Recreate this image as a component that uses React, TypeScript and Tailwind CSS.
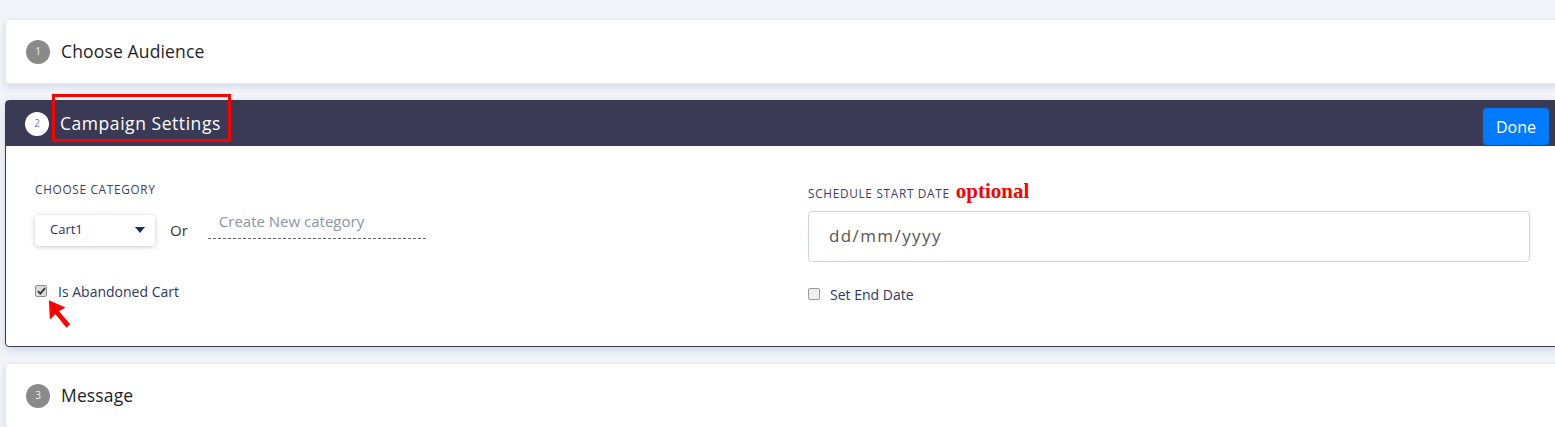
import React from "react";

const heading = { fontFamily: '"Open Sans", "Noto Sans", sans-serif' };
const body = { fontFamily: '"Open Sans", "Noto Sans", sans-serif' };

function Circle({ n, light }: { n: number; light?: boolean }) {
  return (
    <span
      className={
        "flex h-[24px] w-[24px] shrink-0 items-center justify-center rounded-full text-[10px] " +
        (light ? "bg-white text-[#6f74d6]" : "bg-[#8a8a8a] text-[#f3f3f3]")
      }
      style={body}
    >
      {n}
    </span>
  );
}

function CollapsedCard({ n, title }: { n: number; title: string }) {
  return (
    <div className="flex h-[65px] w-[1555px] items-center gap-[11px] rounded-[4px] border border-[#e6eaf0] bg-white pl-[20px] shadow-[0_3px_6px_rgba(30,40,80,0.12)]">
      <Circle n={n} />
      <span className="text-[17.5px] tracking-[0.15px] text-[#1e1e28]" style={heading}>
        {title}
      </span>
    </div>
  );
}

export default function App() {
  return (
    <div className="h-[427px] w-full overflow-hidden bg-[#f1f5f9]">
      <div className="flex flex-col gap-[16px] pl-[5px] pt-[19px]">
        <CollapsedCard n={1} title="Choose Audience" />

        <div className="relative w-[1555px] rounded-[4px] border border-[#3a3a55] bg-white shadow-[0_3px_8px_rgba(30,40,80,0.15)]">
          <div className="flex h-[45px] items-center gap-[11px] bg-[#3a3a55] pl-[19px] pr-[10px]">
            <Circle n={2} light />
            <span className="text-[17.5px] tracking-[0.55px] text-white" style={heading}>
              Campaign Settings
            </span>
            <button
              className="ml-auto mt-[6px] h-[37px] w-[66px] rounded-[4px] bg-[#007bff] text-[16px] text-white"
              style={body}
            >
              Done
            </button>
          </div>
          <div className="pointer-events-none absolute left-[46px] top-[-7px] h-[48px] w-[179px] border-[3px] border-[#ff0000]" />

          <div className="flex h-[200px] px-[29px] pt-[35px]" style={body}>
            <div className="flex w-[722px] flex-col">
              <div className="text-[11.8px] uppercase tracking-[0.7px] text-[#3c3c64]">
                Choose Category
              </div>
              <div className="mt-[16px] flex items-center">
                <div className="flex h-[31px] w-[120px] items-center justify-between rounded-[4px] bg-white pl-[15px] pr-[10px] text-[13px] text-[#25306a] shadow-[0_1px_5px_rgba(0,0,0,0.22)]">
                  <span>Cart1</span>
                  <svg width="10" height="6" viewBox="0 0 10 6">
                    <path d="M0 0 L10 0 L5 6 Z" fill="#1f2a60" />
                  </svg>
                </div>
                <span className="ml-[15px] text-[15px] text-[#333]">Or</span>
                <div className="ml-[20px] mt-[-14px] flex h-[31px] w-[218px] items-start border-b border-dashed border-[#666] pl-[11px] pt-[2px] text-[15px] text-[#8a94a6]">
                  Create New category
                </div>
              </div>
              <div className="relative mt-[35px] flex items-center gap-[11px]">
                <span className="flex h-[12px] w-[12px] items-center justify-center rounded-[2px] border border-[#8f8f8f] bg-[#dcdcdc]">
                  <svg width="9" height="8" viewBox="0 0 9 8">
                    <path d="M1 4.2 L3.4 6.6 L8 1.2" stroke="#333" strokeWidth="1.8" fill="none" />
                  </svg>
                </span>
                <span className="text-[14px] text-[#2d3560]">Is Abandoned Cart</span>
                <svg
                  className="pointer-events-none absolute left-[13px] top-[18px]"
                  width="24"
                  height="30"
                  viewBox="0 0 26 32"
                >
                  <polygon points="1,1 2,22 8,16 20,31 24,27 12,13 19,9" fill="#ff0000" />
                </svg>
              </div>
            </div>
            <div className="ml-auto flex w-[722px] flex-col">
              <div className="flex items-baseline gap-[6px]">
                <span className="text-[11.8px] uppercase tracking-[0.7px] text-[#3c3c64]">
                  Schedule Start Date
                </span>
                <span
                  className="text-[21px] font-bold leading-none text-[#ff0000]"
                  style={{ fontFamily: '"Liberation Serif", serif' }}
                >
                  optional
                </span>
              </div>
              <div className="mt-[8px] flex h-[51px] items-center rounded-[4px] border border-[#cdd4dc] pl-[20px] text-[17px] tracking-[1.4px] text-[#555]">
                dd/mm/yyyy
              </div>
              <div className="mt-[22px] flex items-center gap-[10px]">
                <span className="h-[12px] w-[12px] rounded-[2px] border border-[#9a9a9a] bg-[#f0f0f0]" />
                <span className="text-[14px] text-[#2d3560]">Set End Date</span>
              </div>
            </div>
          </div>
        </div>

        <CollapsedCard n={3} title="Message" />
      </div>
    </div>
  );
}
